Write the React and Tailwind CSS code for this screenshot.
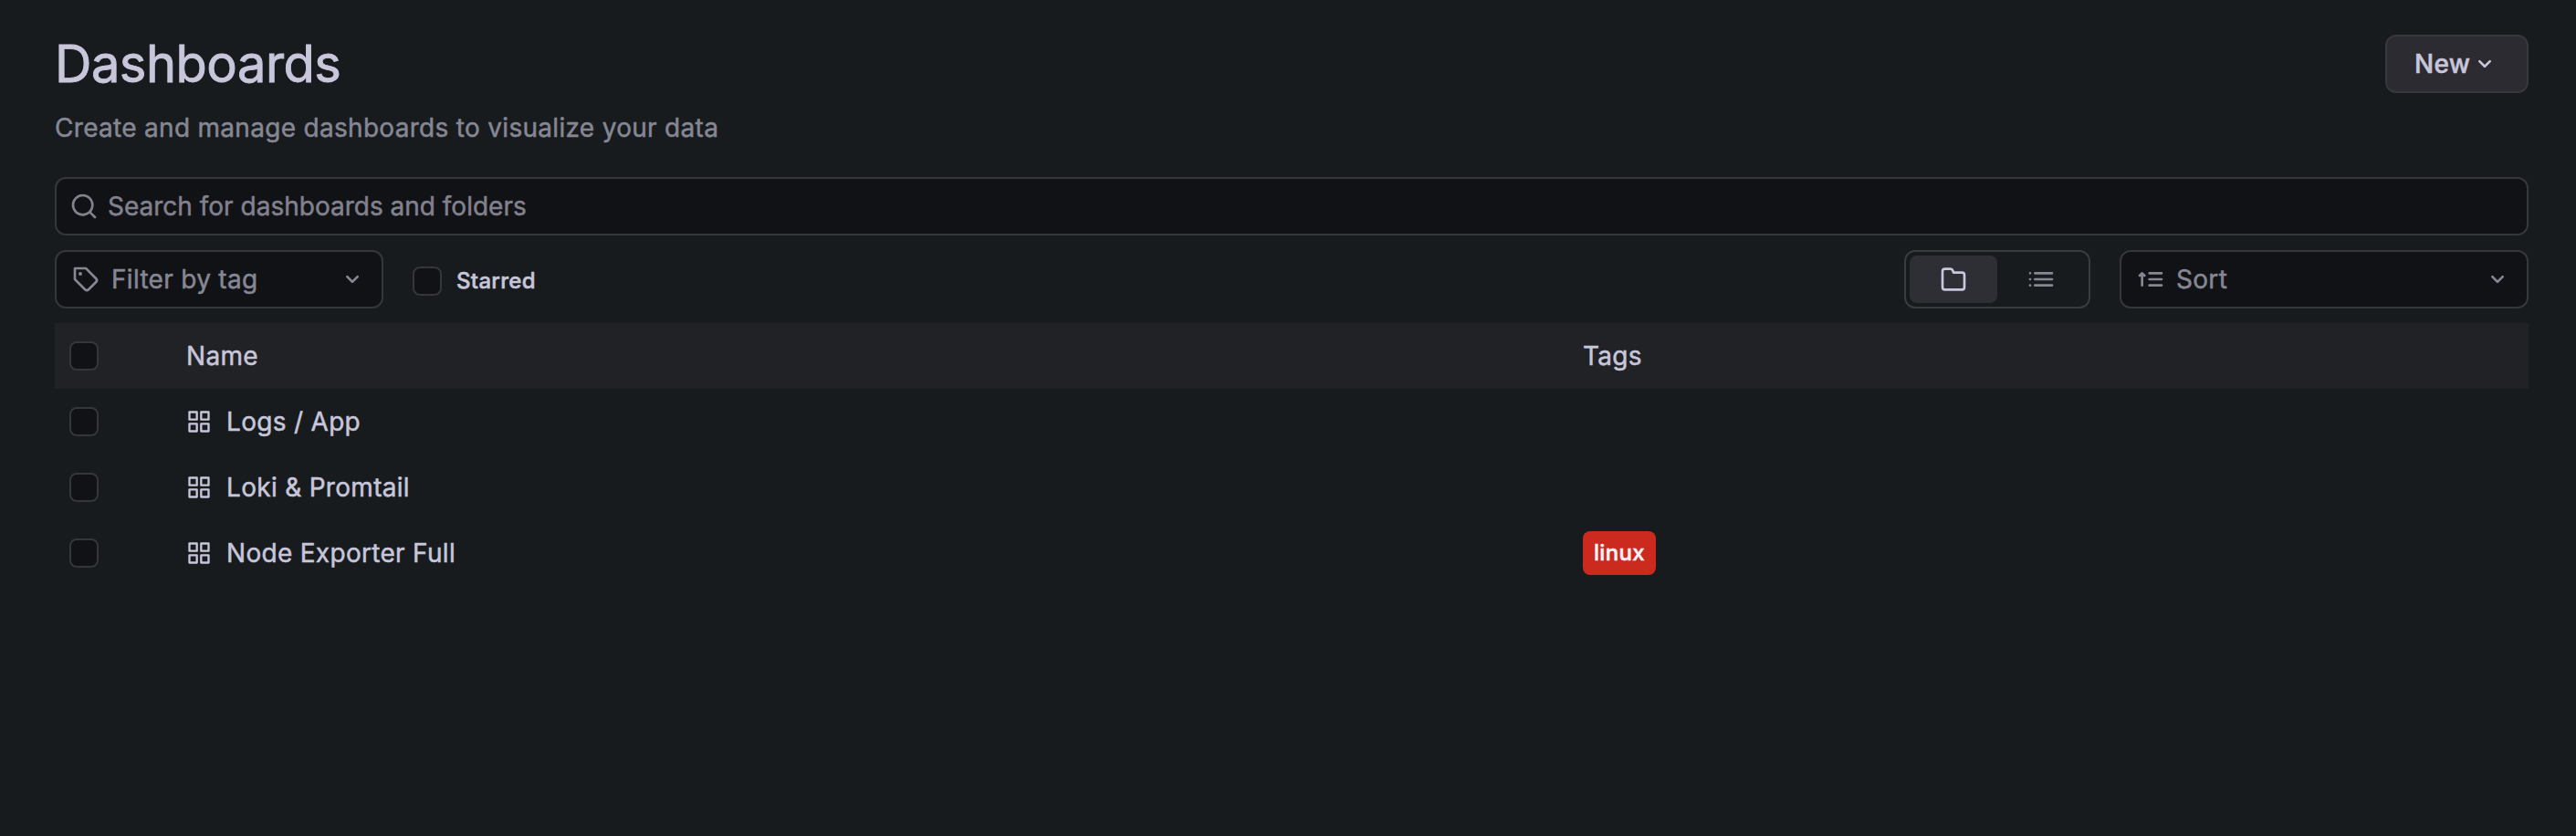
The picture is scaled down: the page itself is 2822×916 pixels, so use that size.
import { useState } from "react";

// Icon shapes, all on a 24x24 grid
const icons = {
    search: "M21.71,20.29,18,16.61A9,9,0,1,0,16.61,18l3.68,3.68a1,1,0,0,0,1.42,0A1,1,0,0,0,21.71,20.29ZM11,18a7,7,0,1,1,7-7A7,7,0,0,1,11,18Z",
    tag: "M7.5,6A1.5,1.5,0,1,0,9,7.5,1.5,1.5,0,0,0,7.5,6Zm13.62,4.71L12.71,2.29A1,1,0,0,0,12,2H3A1,1,0,0,0,2,3v9a1,1,0,0,0,.29.71l8.42,8.41a3,3,0,0,0,4.24,0L21.12,15a3,3,0,0,0,0-4.24Zm-1.41,2.82h0l-6.18,6.17a1,1,0,0,1-1.41,0L4,11.59V4h7.59l8.12,8.12a1,1,0,0,1,.29.71A1,1,0,0,1,19.71,13.53Z",
    angleDown: "M17,9.17a1,1,0,0,0-1.41,0L12,12.71,8.46,9.17a1,1,0,0,0-1.41,0,1,1,0,0,0,0,1.42l4.24,4.24a1,1,0,0,0,1.42,0L17,10.59A1,1,0,0,0,17,9.17Z",
    folder: "M19,5.5H12.72l-.32-1a3,3,0,0,0-2.84-2H5a3,3,0,0,0-3,3v13a3,3,0,0,0,3,3H19a3,3,0,0,0,3-3V8.5A3,3,0,0,0,19,5.5Zm1,13a1,1,0,0,1-1,1H5a1,1,0,0,1-1-1V5.5a1,1,0,0,1,1-1H9.56a1,1,0,0,1,.95.68l.54,1.64A1,1,0,0,0,12,7.5h7a1,1,0,0,1,1,1Z",
    list: "M7,8H21a1,1,0,0,0,0-2H7A1,1,0,0,0,7,8Zm14,3H7a1,1,0,0,0,0,2H21a1,1,0,0,0,0-2Zm0,5H7a1,1,0,0,0,0,2H21a1,1,0,0,0,0-2ZM3,6A1,1,0,1,0,3,8,1,1,0,0,0,3,6Zm0,5a1,1,0,1,0,0,2,1,1,0,0,0,0-2Zm0,5a1,1,0,1,0,0,2,1,1,0,0,0,0-2Z",
    sort: "M5.71,6.29a1,1,0,0,0-1.42,0l-2,2A1,1,0,0,0,3.71,9.71L4,9.41V17a1,1,0,0,0,2,0V9.41l.29.3A1,1,0,0,0,7.71,8.29ZM11,8H21a1,1,0,0,0,0-2H11a1,1,0,0,0,0,2Zm10,3H11a1,1,0,0,0,0,2H21a1,1,0,0,0,0-2Zm0,5H11a1,1,0,0,0,0,2H21a1,1,0,0,0,0-2Z",
    apps: "M10,13H3a1,1,0,0,0-1,1v7a1,1,0,0,0,1,1h7a1,1,0,0,0,1-1V14A1,1,0,0,0,10,13ZM9,20H4V15H9ZM21,2H14a1,1,0,0,0-1,1v7a1,1,0,0,0,1,1h7a1,1,0,0,0,1-1V3A1,1,0,0,0,21,2ZM20,9H15V4h5Zm1,4H14a1,1,0,0,0-1,1v7a1,1,0,0,0,1,1h7a1,1,0,0,0,1-1V14A1,1,0,0,0,21,13Zm-1,7H15V15h5ZM10,2H3A1,1,0,0,0,2,3v7a1,1,0,0,0,1,1h7a1,1,0,0,0,1-1V3A1,1,0,0,0,10,2ZM9,9H4V4H9Z",
};

const Icon = ({ name, className = "size-8" }) => (
    <svg viewBox="0 0 24 24" fill="currentColor" className={`shrink-0 ${className}`} aria-hidden="true">
        <path d={icons[name]} />
    </svg>
);

const Checkbox = ({ label }) => (
    <input
        type="checkbox"
        aria-label={label}
        className="size-8 shrink-0 appearance-none rounded-lg border-2 border-[#35363b] bg-[#111216] checked:bg-[#3d71d9]"
    />
);

const dashboards = [
    { title: "Logs / App", tags: [] },
    { title: "Loki & Promtail", tags: [] },
    { title: "Node Exporter Full", tags: ["linux"] },
];

const App = () => {
    const [view, setView] = useState("folder");

    return (
        <main className="min-h-screen bg-[#171b1e] pt-[38px] pr-[52px] pl-[60px] font-['Inter',sans-serif] text-[28px] leading-[44px] tracking-[0.3px] text-[#c8c6da] [-webkit-text-stroke:0.5px]">
            {/* Title */}
            <header className="flex items-start justify-between">
                <div>
                    <h1 className="text-[56px] leading-16 tracking-[-0.5px] [-webkit-text-stroke:0.9px]">Dashboards</h1>
                    <p className="mt-4 text-[#868793]">Create and manage dashboards to visualize your data</p>
                </div>
                <button className="flex h-16 w-[157px] items-center rounded-xl border-2 border-[#36383c] bg-[#2b2b31] pl-[30px] font-medium">
                    New
                    <Icon name="angleDown" />
                </button>
            </header>

            {/* Search */}
            <div className="mt-8 flex h-16 items-center gap-[10px] rounded-xl border-2 border-[#36373b] bg-[#111216] px-3.5 text-[#82818d]">
                <Icon name="search" />
                <input
                    type="text"
                    placeholder="Search for dashboards and folders"
                    className="flex-1 bg-transparent tracking-normal outline-none placeholder:text-[#82818d]"
                />
            </div>

            {/* Filters */}
            <div className="mt-4 flex items-center text-[#868793]">
                <button className="flex h-16 w-[360px] items-center rounded-xl border-2 border-[#36373b] bg-[#111216] px-4">
                    <Icon name="tag" />
                    <span className="ml-3 flex-1 text-left">Filter by tag</span>
                    <Icon name="angleDown" />
                </button>
                <label className="mt-1 ml-8 flex items-center gap-4 text-2xl font-medium text-[#c8c6da]">
                    <Checkbox label="Starred" />
                    Starred
                </label>

                <div className="ml-auto flex h-16 rounded-xl border-2 border-[#3a3b40] p-1">
                    <button
                        onClick={() => setView("folder")}
                        aria-label="View by folders"
                        className={`flex w-24 items-center justify-center rounded-lg ${view === "folder" ? "bg-[#2d2f34] text-[#c8c6da]" : ""}`}
                    >
                        <Icon name="folder" />
                    </button>
                    <button
                        onClick={() => setView("list")}
                        aria-label="View as list"
                        className={`flex w-24 items-center justify-center rounded-lg ${view === "list" ? "bg-[#2d2f34] text-[#c8c6da]" : ""}`}
                    >
                        <Icon name="list" />
                    </button>
                </div>
                <button className="ml-8 flex h-16 w-[448px] items-center rounded-xl border-2 border-[#36373b] bg-[#111216] px-4">
                    <Icon name="sort" />
                    <span className="ml-3 flex-1 text-left">Sort</span>
                    <Icon name="angleDown" />
                </button>
            </div>

            {/* Table */}
            <section className="mt-4">
                <div className="flex h-18 items-center bg-[#212226] pl-4">
                    <Checkbox label="Select all" />
                    <div className="ml-24 w-[1530px]">Name</div>
                    <div>Tags</div>
                </div>
                {dashboards.map((item) => (
                    <div key={item.title} className="flex h-18 items-center pl-4">
                        <Checkbox label={item.title} />
                        <div className="ml-24 flex w-[1530px] items-center gap-4">
                            <Icon name="apps" className="size-7" />
                            {item.title}
                        </div>
                        {item.tags.map((tag) => (
                            <span key={tag} className="flex h-12 items-center rounded-lg bg-[#cc2a1f] px-3 text-2xl font-medium text-[#f5f3f8]">
                                {tag}
                            </span>
                        ))}
                    </div>
                ))}
            </section>
        </main>
    );
};

export default App;
